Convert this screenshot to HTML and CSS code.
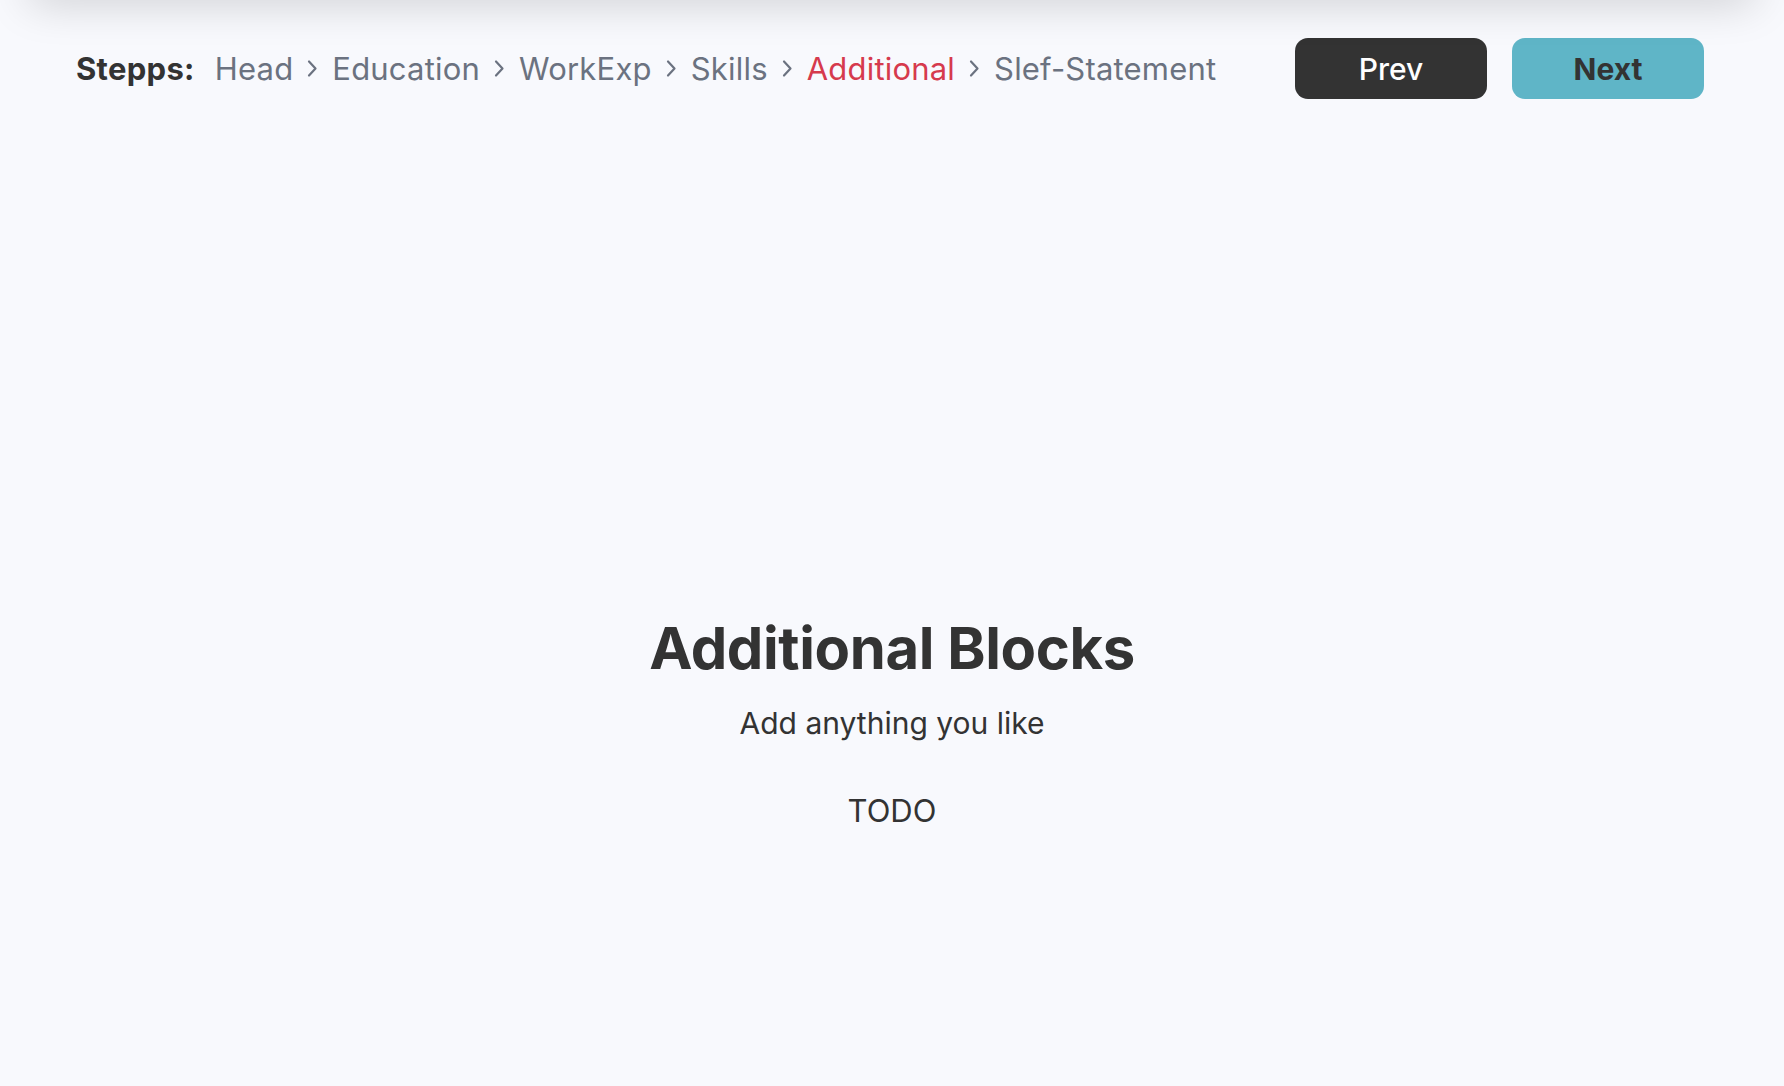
FILE: index.html
```html
<!DOCTYPE html>
<html lang="en">
<head>
<meta charset="utf-8">
<title>Additional Blocks</title>
<link rel="stylesheet" href="styles.css">
</head>
<body>
<div class="page">
  <header class="topbar">
    <nav class="steps">
      <span class="steps-label">Stepps:</span>
      <span class="step">Head</span>
      <svg class="chev" viewBox="0 0 11 19"><path d="M2 2.5l6.5 7-6.5 7"/></svg>
      <span class="step">Education</span>
      <svg class="chev" viewBox="0 0 11 19"><path d="M2 2.5l6.5 7-6.5 7"/></svg>
      <span class="step">WorkExp</span>
      <svg class="chev" viewBox="0 0 11 19"><path d="M2 2.5l6.5 7-6.5 7"/></svg>
      <span class="step">Skills</span>
      <svg class="chev" viewBox="0 0 11 19"><path d="M2 2.5l6.5 7-6.5 7"/></svg>
      <span class="step step-active">Additional</span>
      <svg class="chev" viewBox="0 0 11 19"><path d="M2 2.5l6.5 7-6.5 7"/></svg>
      <span class="step">Slef-Statement</span>
    </nav>
    <div class="actions">
      <button class="btn btn-prev">Prev</button>
      <button class="btn btn-next">Next</button>
    </div>
  </header>
  <main class="content">
    <h1 class="title">Additional Blocks</h1>
    <p class="subtitle">Add anything you like</p>
    <p class="todo">TODO</p>
  </main>
</div>
</body>
</html>
```

FILE: styles.css
```css
html, body {
  margin: 0;
  padding: 0;
}
body {
  background: #f8f9fd;
  font-family: Inter, "Noto Sans", "Liberation Sans", sans-serif;
  color: #333333;
  overflow: hidden;
}
.page {
  position: relative;
  min-height: 1086px;
  display: flex;
  flex-direction: column;
}
.page::before {
  content: "";
  position: absolute;
  top: -30px;
  left: 30px;
  right: 30px;
  height: 30px;
  box-shadow: 0 0 45px rgba(0, 0, 0, 0.22);
  background: #d8d8dc;
}
.topbar {
  display: flex;
  align-items: center;
  justify-content: space-between;
  padding: 38px 80px 0 76px;
}
.steps {
  display: flex;
  align-items: center;
  gap: 14px;
  font-size: 31px;
  line-height: 38px;
  letter-spacing: 0.2px;
}
.steps-label {
  font-weight: 700;
  color: #333333;
  margin-right: 6px;
  letter-spacing: 0.3px;
}
.step {
  color: #6b7280;
}
.step-active {
  color: #d63a4d;
}
.chev {
  width: 11px;
  height: 19px;
  fill: none;
  stroke: #6b7280;
  stroke-width: 2.2;
  stroke-linecap: round;
  stroke-linejoin: round;
}
.actions {
  display: flex;
  gap: 25px;
}
.btn {
  width: 192px;
  height: 61px;
  border: none;
  border-radius: 13px;
  font-family: Inter, "Noto Sans", "Liberation Sans", sans-serif;
  font-size: 30px;
  cursor: pointer;
}
.btn-prev {
  background: #333333;
  color: #ffffff;
  font-weight: 500;
}
.btn-next {
  background: #5fb5c7;
  color: #333333;
  font-weight: 700;
}
.content {
  display: flex;
  flex-direction: column;
  align-items: center;
  padding-top: 508px;
  text-align: center;
}
.title {
  margin: 0;
  font-size: 58px;
  line-height: 82px;
  font-weight: 700;
  letter-spacing: -0.4px;
}
.subtitle {
  margin: 14px 0 0;
  font-size: 30px;
  line-height: 40px;
}
.todo {
  margin: 48px 0 0;
  font-size: 31px;
  line-height: 40px;
}
```
